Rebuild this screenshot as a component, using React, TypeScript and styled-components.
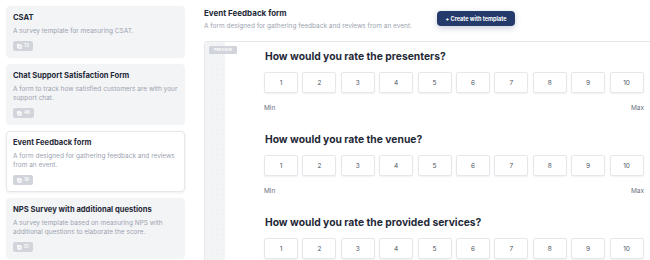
import { FC } from "react";
import styled, { createGlobalStyle } from "styled-components";

/** Templates shown in the left list */
const TEMPLATES: TemplateCardProps[] = [
  {
    title: "CSAT",
    description: "A survey template for measuring CSAT.",
    count: 13,
  },
  {
    title: "Chat Support Satisfaction Form",
    description:
      "A form to track how satisfied customers are with your support chat.",
    count: 46,
  },
  {
    title: "Event Feedback form",
    description:
      "A form designed for gathering feedback and reviews from an event.",
    count: 16,
    selected: true,
  },
  {
    title: "NPS Survey with additional questions",
    description:
      "A survey template based on measuring NPS with additional questions to elaborate the score.",
    count: 51,
  },
];

const QUESTIONS = [
  "How would you rate the presenters?",
  "How would you rate the venue?",
  "How would you rate the provided services?",
];

const SCALE = [1, 2, 3, 4, 5, 6, 7, 8, 9, 10];

const GlobalStyle = createGlobalStyle`
  html, body {
    margin: 0;
    padding: 0;
    background: #ffffff;
    font-family: Inter, "Noto Sans", Arial, sans-serif;
    overflow: hidden;
  }
`;

const App = () => (
  <>
    <GlobalStyle />
    <Page>
      <Sidebar>
        {TEMPLATES.map((template) => (
          <TemplateCard key={template.title} {...template} />
        ))}
      </Sidebar>
      <Main>
        <Header>
          <div>
            <FormTitle>Event Feedback form</FormTitle>
            <FormDescription>
              A form designed for gathering feedback and reviews from an event.
            </FormDescription>
          </div>
          <CreateButton>+ Create with template</CreateButton>
        </Header>
        <Preview>
          <PreviewBadge>PREVIEW</PreviewBadge>
          <PreviewStrip />
          <PreviewContent>
            {QUESTIONS.map((question) => (
              <Question key={question}>
                <QuestionTitle>{question}</QuestionTitle>
                <Scale>
                  {SCALE.map((n) => (
                    <ScaleOption key={n}>{n}</ScaleOption>
                  ))}
                </Scale>
                <ScaleLabels>
                  <span>Min</span>
                  <span>Max</span>
                </ScaleLabels>
              </Question>
            ))}
          </PreviewContent>
          <BottomFade />
        </Preview>
      </Main>
    </Page>
  </>
);

const Page = styled.div`
  display: flex;
  height: 260px;
  width: 650px;
  overflow: hidden;
`;

const Sidebar = styled.div`
  display: flex;
  flex-direction: column;
  gap: 6px;
  width: 179px;
  flex-shrink: 0;
  padding: 6px 0 0 6px;
`;

interface TemplateCardProps {
  /** Template name */
  title: string;
  /** Short explanation under the name */
  description: string;
  /** Number shown in the little badge */
  count: number;
  /** Whether this template is the one previewed */
  selected?: boolean;
}

const TemplateCard: FC<TemplateCardProps> = ({
  title,
  description,
  count,
  selected,
}) => (
  <Card $selected={selected}>
    <CardTitle>{title}</CardTitle>
    <CardDescription>{description}</CardDescription>
    <CountBadge>
      <svg width="5" height="5" viewBox="0 0 10 10" fill="none">
        <rect x="1" y="1" width="6" height="6" stroke="#fff" strokeWidth="1.4" />
        <rect x="3" y="3" width="6" height="6" stroke="#fff" strokeWidth="1.4" />
      </svg>
      {count}
    </CountBadge>
  </Card>
);

const Card = styled.div<{ $selected?: boolean }>`
  display: flex;
  flex-direction: column;
  align-items: flex-start;
  padding: 5px 6px 6px;
  border-radius: 4px;
  background: ${({ $selected }) => ($selected ? "#ffffff" : "#f3f4f6")};
  border: 1px solid ${({ $selected }) => ($selected ? "#e5e7eb" : "#f3f4f6")};
  box-shadow: ${({ $selected }) =>
    $selected ? "0 1px 3px rgba(17, 24, 39, 0.08)" : "none"};
`;

const CardTitle = styled.div`
  font-size: 7.6px;
  line-height: 12px;
  font-weight: 700;
  color: #1f2937;
`;

const CardDescription = styled.div`
  margin-top: 3px;
  font-size: 6.5px;
  line-height: 9px;
  color: #9ca3af;
`;

const CountBadge = styled.div`
  display: flex;
  align-items: center;
  gap: 2px;
  margin-top: 5px;
  height: 10px;
  padding: 0 4px;
  border-radius: 2px;
  background: #d1d5db;
  color: #ffffff;
  font-size: 4.5px;
  line-height: 10px;
  font-weight: 600;
`;

const Main = styled.div`
  flex: 1;
  display: flex;
  flex-direction: column;
  padding: 8px 0 0 19px;
  min-width: 0;
`;

const Header = styled.div`
  display: flex;
  justify-content: space-between;
  align-items: flex-start;
  width: 311px;
`;

const FormTitle = styled.div`
  font-size: 8px;
  line-height: 11px;
  font-weight: 700;
  color: #1f2937;
`;

const FormDescription = styled.div`
  margin-top: 3px;
  font-size: 6.5px;
  line-height: 9px;
  color: #9ca3af;
`;

const CreateButton = styled.button`
  margin-top: 3px;
  height: 15px;
  width: 78px;
  padding: 0;
  border: none;
  border-radius: 4px;
  background: #233a6a;
  color: #ffffff;
  font-family: inherit;
  font-size: 5.5px;
  font-weight: 700;
  box-shadow: 0 2px 6px rgba(35, 58, 106, 0.25);
`;

const Preview = styled.div`
  position: relative;
  margin-top: 10px;
  flex: 1;
  display: flex;
  border: 1px solid #e5e7eb;
  border-right: none;
  border-bottom: none;
  border-top-left-radius: 4px;
`;

const PreviewBadge = styled.div`
  position: absolute;
  top: 4px;
  left: 4px;
  width: 28px;
  height: 8px;
  border-radius: 1px;
  background: #d1d5db;
  color: #ffffff;
  font-size: 3.5px;
  font-weight: 700;
  letter-spacing: 0.3px;
  display: flex;
  align-items: center;
  justify-content: center;
`;

const PreviewStrip = styled.div`
  width: 20px;
  flex-shrink: 0;
  background-color: #f3f4f6;
  background-image: radial-gradient(#e9eaee 0.6px, transparent 0.7px);
  background-size: 5px 5px;
  border-top-left-radius: 4px;
`;

const PreviewContent = styled.div`
  display: flex;
  flex-direction: column;
  gap: 18px;
  padding: 6px 0 0 39px;
`;

const BottomFade = styled.div`
  position: absolute;
  left: -30px;
  right: 0;
  bottom: 0;
  height: 6px;
  background: linear-gradient(rgba(255, 255, 255, 0), rgba(255, 255, 255, 0.8));
`;

const Question = styled.div`
  display: flex;
  flex-direction: column;
  width: 380px;
`;

const QuestionTitle = styled.div`
  margin-left: 1px;
  font-size: 10.3px;
  line-height: 16px;
  font-weight: 700;
  color: #1f2937;
`;

const Scale = styled.div`
  display: grid;
  grid-template-columns: repeat(10, 34px);
  column-gap: 4.4px;
  margin-top: 8px;
`;

const ScaleOption = styled.div`
  box-sizing: border-box;
  height: 21px;
  display: flex;
  align-items: center;
  justify-content: center;
  background: #ffffff;
  border: 1px solid #e5e7eb;
  border-radius: 2px;
  box-shadow: 0 1px 2px rgba(17, 24, 39, 0.06);
  color: #4b5563;
  font-size: 6.5px;
`;

const ScaleLabels = styled.div`
  display: flex;
  justify-content: space-between;
  margin-top: 10px;
  font-size: 6.5px;
  line-height: 10px;
  color: #6b7280;
`;

export default App;
